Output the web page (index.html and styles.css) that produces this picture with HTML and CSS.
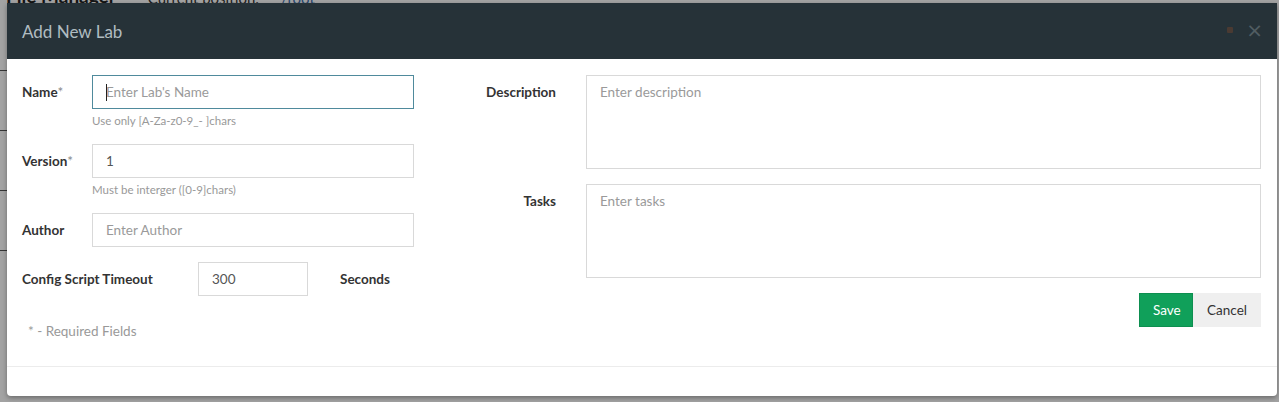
FILE: index.html
```html
<!DOCTYPE html>
<html>
<head>
<meta charset="utf-8">
<link rel="stylesheet" href="styles.css">
</head>
<body>
<div class="page">
  <div class="page-head">
    <span class="page-title">File Manager</span>
    <span class="page-pos">Current position:</span>
    <span class="page-root">/root</span>
  </div>
  <div class="page-rows">
    <div class="page-row"></div>
    <div class="page-row"></div>
    <div class="page-row"></div>
    <div class="page-row"></div>
  </div>
</div>
<div class="overlay"></div>
<div class="modal">
  <div class="modal-header">
    <h4 class="modal-title">Add New Lab</h4>
    <div class="header-tools">
      <span class="tool-dot"></span>
      <span class="tool-close">&times;</span>
    </div>
  </div>
  <div class="modal-body">
    <div class="col-left">
      <div class="row">
        <label class="lbl">Name<span class="req">*</span></label>
        <div class="field">
          <div class="input-wrap">
            <input class="input input-focus" type="text" placeholder="Enter Lab's Name">
            <span class="caret"></span>
          </div>
          <div class="help">Use only [A-Za-z0-9_- ]chars</div>
        </div>
      </div>
      <div class="row">
        <label class="lbl">Version<span class="req">*</span></label>
        <div class="field">
          <input class="input" type="text" value="1">
          <div class="help">Must be interger ([0-9]chars)</div>
        </div>
      </div>
      <div class="row">
        <label class="lbl">Author</label>
        <div class="field">
          <input class="input" type="text" placeholder="Enter Author">
        </div>
      </div>
      <div class="row row-timeout">
        <label class="lbl lbl-wide">Config Script Timeout</label>
        <input class="input input-small" type="text" value="300">
        <span class="lbl unit">Seconds</span>
      </div>
      <div class="required-note">* - Required Fields</div>
    </div>
    <div class="col-right">
      <div class="rrow">
        <label class="rlbl">Description</label>
        <textarea class="textarea" placeholder="Enter description"></textarea>
      </div>
      <div class="rrow">
        <label class="rlbl">Tasks</label>
        <textarea class="textarea" placeholder="Enter tasks"></textarea>
      </div>
      <div class="actions">
        <button class="btn btn-save">Save</button>
        <button class="btn btn-cancel">Cancel</button>
      </div>
    </div>
  </div>
  <div class="modal-footer"></div>
</div>
</body>
</html>
```

FILE: styles.css
```css
* { box-sizing: border-box; }
html, body { margin: 0; padding: 0; }
body {
  width: 1279px;
  height: 402px;
  overflow: hidden;
  background: #fff;
  font-family: Lato, "Liberation Sans", sans-serif;
  position: relative;
}
.page-head {
  height: 22px;
  margin-top: -15px;
  display: flex;
  align-items: flex-end;
  padding-left: 6px;
  white-space: nowrap;
}
.page-title { font-size: 19px; font-weight: bold; color: #222; }
.page-pos { font-size: 15px; color: #333; margin-left: 32px; }
.page-root { font-size: 15px; color: #3a6fb0; margin-left: 22px; }
.page-rows { margin-top: 4px; }
.page-row { height: 60px; border-bottom: 1px solid #555; width: 40px; }
.overlay {
  position: absolute;
  inset: 0;
  background: rgba(0, 0, 0, 0.36);
}
.modal {
  position: absolute;
  left: 7px;
  top: 3px;
  width: 1270px;
  background: #fff;
  border-radius: 0 0 4px 4px;
  box-shadow: 0 2px 5px rgba(0, 0, 0, 0.35);
}
.modal-header {
  height: 56px;
  background: #263238;
  display: flex;
  align-items: center;
  justify-content: space-between;
  padding: 0 14px 0 15px;
}
.modal-title {
  margin: 0;
  font-size: 17px;
  font-weight: normal;
  color: #b0bcc1;
}
.header-tools { display: flex; align-items: center; gap: 13px; margin-top: -3px; }
.tool-dot {
  width: 6px; height: 6px;
  background: #4a3a32;
  border-radius: 1px;
}
.tool-close {
  font-size: 20px;
  line-height: 20px;
  color: #515d62;
  font-family: "DejaVu Sans", sans-serif;
}
.modal-body {
  display: flex;
  padding: 16px 16px 25px 15px;
}
.col-left { width: 392px; flex: none; }
.row {
  display: flex;
  align-items: flex-start;
  margin-bottom: 15px;
}
.lbl {
  width: 70px;
  flex: none;
  font-size: 13.5px;
  font-weight: bold;
  color: #333;
  line-height: 34px;
}
.req { font-weight: normal; color: #888; }
.field { flex: 1; }
.input {
  display: block;
  width: 100%;
  height: 34px;
  border: 1px solid #d9d9d9;
  padding: 0 13px;
  font-family: Lato, "Liberation Sans", sans-serif;
  font-size: 13.5px;
  color: #555;
  background: #fff;
  outline: none;
  border-radius: 0;
}
.input::placeholder, .textarea::placeholder { color: #9a9a9a; }
.input-wrap { position: relative; }
.input-focus { border-color: #4f8a9c; }
.caret {
  position: absolute;
  left: 14px;
  top: 9px;
  width: 1px;
  height: 17px;
  background: #222;
}
.help {
  font-size: 11.5px;
  color: #999;
  line-height: 14px;
  padding-top: 5px;
  height: 20px;
}
.row-timeout { align-items: center; }
.lbl-wide { width: 176px; }
.input-small { width: 110px; flex: none; }
.unit { width: auto; margin-left: 32px; }
.required-note {
  padding-top: 10px;
  padding-left: 6px;
  font-size: 13.5px;
  line-height: 20px;
  color: #999;
}
.col-right { flex: 1; }
.rrow {
  display: flex;
  align-items: flex-start;
  margin-bottom: 15px;
}
.rlbl {
  width: 172px;
  flex: none;
  text-align: right;
  padding-right: 30px;
  font-size: 13.5px;
  font-weight: bold;
  color: #333;
  line-height: 34px;
}
.textarea {
  flex: 1;
  height: 94px;
  border: 1px solid #d9d9d9;
  padding: 8px 13px;
  font-family: Lato, "Liberation Sans", sans-serif;
  font-size: 13.5px;
  line-height: 17px;
  resize: none;
  outline: none;
  border-radius: 0;
}
.actions { display: flex; justify-content: flex-end; }
.btn {
  height: 34px;
  border: 1px solid transparent;
  font-family: Lato, "Liberation Sans", sans-serif;
  font-size: 13.5px;
  padding: 0 13px;
  border-radius: 0;
}
.btn-save { width: 54px; background: #10a05a; border-color: #0d8f50; color: #fff; }
.btn-cancel { width: 68px; background: #efefef; border-color: #efefef; color: #333; }
.modal-footer {
  height: 30px;
  border-top: 1px solid #ececec;
}
```
